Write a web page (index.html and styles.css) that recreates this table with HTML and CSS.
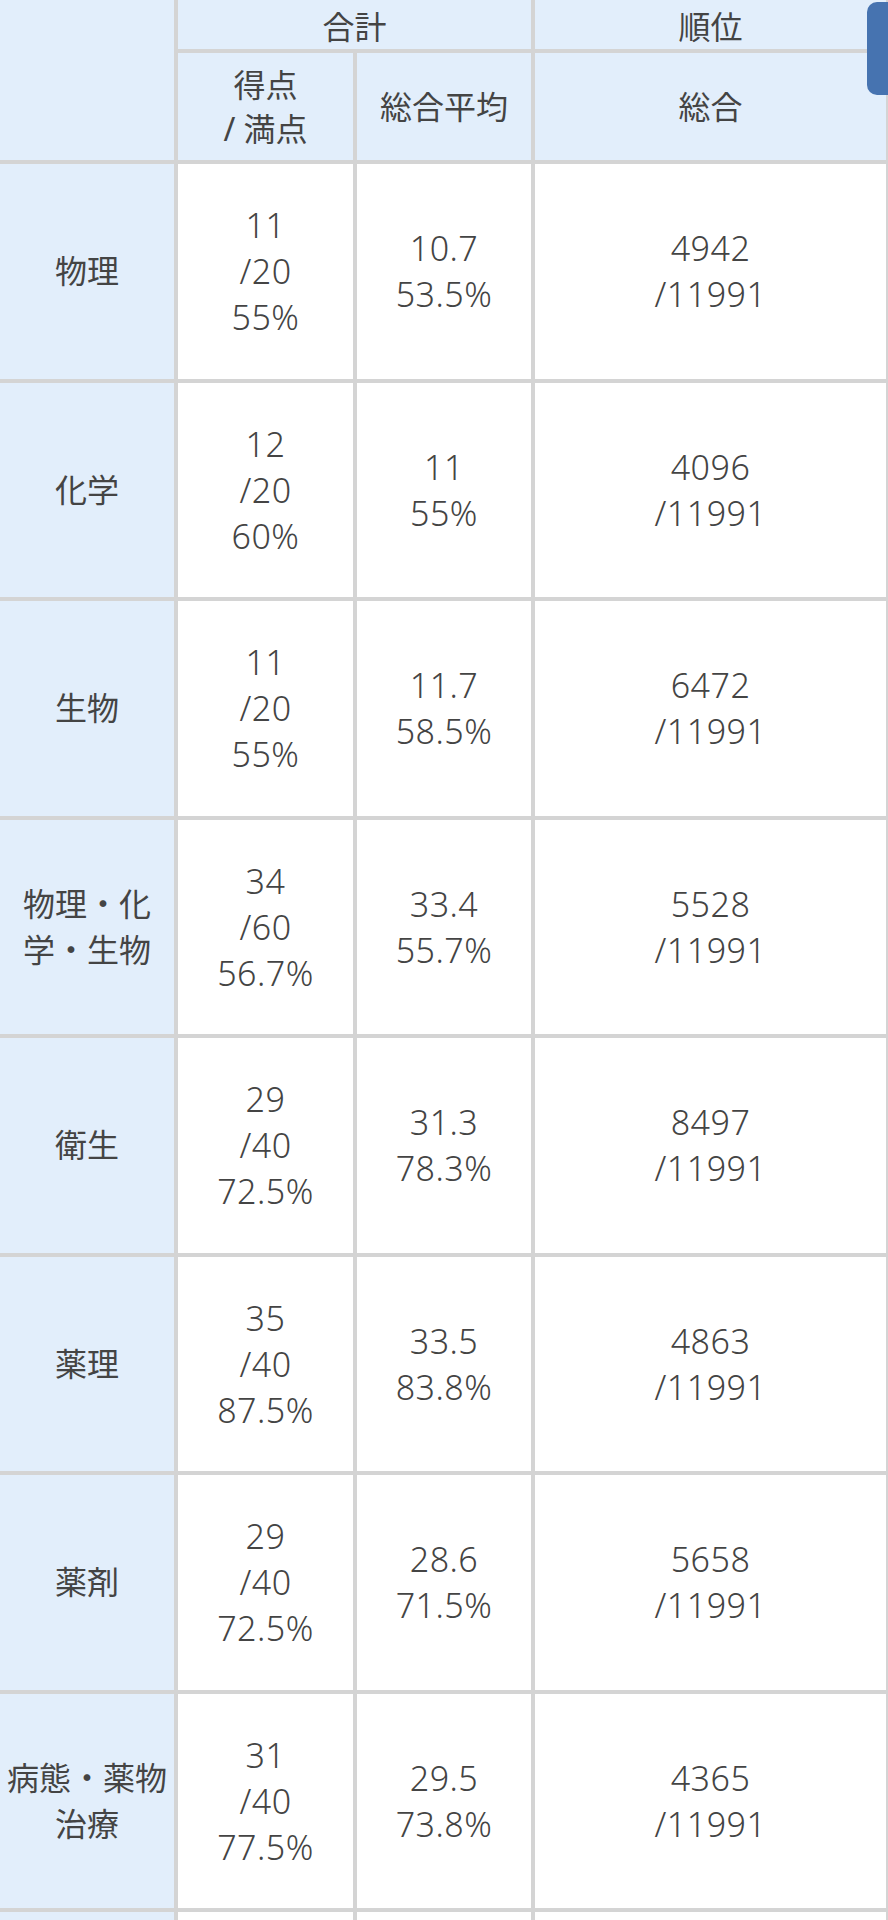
FILE: index.html
```html
<!DOCTYPE html>
<html lang="ja">
<head>
<meta charset="utf-8">
<title>成績表</title>
<link rel="stylesheet" href="styles.css">
</head>
<body>
<div class="page">
  <div class="grid">
    <div class="cell head corner"></div>
    <div class="cell head top span2">合計</div>
    <div class="cell head top">順位</div>
    <div class="cell head">得点<br>/ 満点</div>
    <div class="cell head">総合平均</div>
    <div class="cell head">総合</div>

    <div class="cell label">物理</div>
    <div class="cell">11<br>/20<br>55%</div>
    <div class="cell">10.7<br>53.5%</div>
    <div class="cell">4942<br>/11991</div>

    <div class="cell label">化学</div>
    <div class="cell">12<br>/20<br>60%</div>
    <div class="cell">11<br>55%</div>
    <div class="cell">4096<br>/11991</div>

    <div class="cell label">生物</div>
    <div class="cell">11<br>/20<br>55%</div>
    <div class="cell">11.7<br>58.5%</div>
    <div class="cell">6472<br>/11991</div>

    <div class="cell label">物理・化<br>学・生物</div>
    <div class="cell">34<br>/60<br>56.7%</div>
    <div class="cell">33.4<br>55.7%</div>
    <div class="cell">5528<br>/11991</div>

    <div class="cell label">衛生</div>
    <div class="cell">29<br>/40<br>72.5%</div>
    <div class="cell">31.3<br>78.3%</div>
    <div class="cell">8497<br>/11991</div>

    <div class="cell label">薬理</div>
    <div class="cell">35<br>/40<br>87.5%</div>
    <div class="cell">33.5<br>83.8%</div>
    <div class="cell">4863<br>/11991</div>

    <div class="cell label">薬剤</div>
    <div class="cell">29<br>/40<br>72.5%</div>
    <div class="cell">28.6<br>71.5%</div>
    <div class="cell">5658<br>/11991</div>

    <div class="cell label">病態・薬物<br>治療</div>
    <div class="cell">31<br>/40<br>77.5%</div>
    <div class="cell">29.5<br>73.8%</div>
    <div class="cell">4365<br>/11991</div>

    <div class="cell label"></div>
    <div class="cell"></div>
    <div class="cell"></div>
    <div class="cell"></div>
  </div>
  <div class="side-tab"></div>
</div>
</body>
</html>
```

FILE: styles.css
```css
html, body {
  margin: 0;
  padding: 0;
  background: #ffffff;
  overflow: hidden;
}

.page {
  position: relative;
  width: 888px;
  height: 1920px;
  overflow: hidden;
}

.grid {
  display: grid;
  grid-template-columns: 174px 175px 174px 351px;
  grid-template-rows: 49px 107px repeat(9, 214.5px);
  gap: 4px;
  padding: 4px;
  margin: -4px 0 0 -4px;
  width: max-content;
  background: #d4d4d4;
  font-family: "Noto Sans", "Noto Sans CJK JP", sans-serif;
  font-weight: 300;
  font-size: 34px;
  line-height: 46px;
  letter-spacing: 0.5px;
  color: #444444;
}

.cell {
  display: flex;
  align-items: center;
  justify-content: center;
  text-align: center;
  background: #ffffff;
  padding: 0 4px;
}

.head {
  background: #e2eefb;
  font-weight: 400;
  font-size: 32px;
  line-height: 44px;
  letter-spacing: 0;
}

.head.top {
  padding-top: 5px;
}

.corner {
  grid-row: span 2;
}

.span2 {
  grid-column: span 2;
}

.label {
  background: #e2eefb;
  font-weight: 400;
  font-size: 32px;
  line-height: 46px;
  letter-spacing: 0;
  padding: 0 2px;
}

.side-tab {
  position: absolute;
  top: 2px;
  right: -12px;
  width: 33px;
  height: 93px;
  background: #4673b0;
  border-radius: 10px;
}
```
